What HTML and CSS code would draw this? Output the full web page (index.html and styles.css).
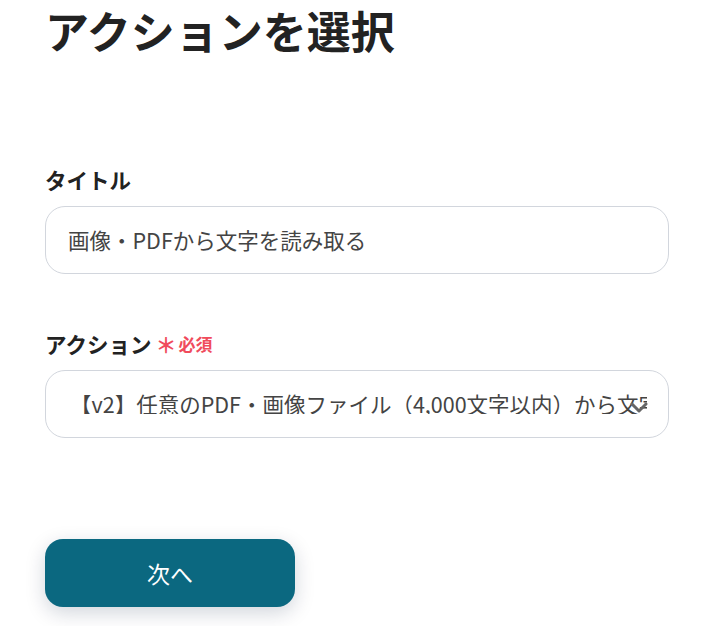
FILE: index.html
```html
<!DOCTYPE html>
<html lang="ja">
<head>
<meta charset="utf-8">
<link rel="stylesheet" href="styles.css">
</head>
<body>
<main class="page">
  <h1 class="title">アクションを選択</h1>
  <section class="field field-title">
    <div class="label">タイトル</div>
    <div class="box">
      <span class="value">画像・PDFから文字を読み取る</span>
    </div>
  </section>
  <section class="field field-action">
    <div class="label">アクション<span class="req"><span class="star">＊</span>必須</span></div>
    <div class="box select">
      <span class="value nowrap">【v2】任意のPDF・画像ファイル（4,000文字以内）から文字を読み取る</span>
      <svg class="chev" width="18" height="12" viewBox="0 0 18 12"><path d="M2 3 L9 10 L16 3" fill="none" stroke="#666" stroke-width="3" stroke-linecap="round" stroke-linejoin="round"/></svg>
    </div>
  </section>
  <button class="next">次へ</button>
</main>
</body>
</html>
```
FILE: styles.css
```css
* { box-sizing: border-box; }
html, body { margin: 0; padding: 0; background: #fff; }
body {
  font-family: "Noto Sans CJK JP", "Noto Sans", sans-serif;
  color: #222;
}
.page {
  width: 716px;
  height: 626px;
  overflow: hidden;
  padding: 0 47px 0 45px;
}
.title {
  margin: 0;
  font-size: 44px;
  font-weight: 700;
  line-height: 1.4;
  color: #222;
}
.field-title { margin-top: 104px; }
.field-action { margin-top: 56px; }
.label {
  font-size: 21.5px;
  font-weight: 700;
  line-height: 28px;
  color: #222;
  display: flex;
  align-items: center;
}
.req {
  color: #f04b5c;
  font-size: 17px;
  margin-left: 4px;
  display: inline-flex;
  align-items: center;
}
.star { font-size: 21px; margin-right: 2px; }
.box {
  margin-top: 12px;
  height: 68px;
  border: 1px solid #d2d6dd;
  border-radius: 20px;
  display: flex;
  align-items: center;
  padding: 0 22px;
  position: relative;
  overflow: hidden;
}
.value {
  font-size: 21.5px;
  color: #444;
  line-height: 1;
}
.select { padding-left: 24px; padding-right: 21px; }
.nowrap { white-space: nowrap; overflow: hidden; }
.chev {
  position: absolute;
  right: 20px;
  top: 30px;
}
.next {
  display: block;
  margin-top: 101px;
  width: 250px;
  height: 68px;
  border: none;
  border-radius: 18px;
  background: #0b6880;
  color: #fff;
  font-family: "Noto Sans CJK JP", sans-serif;
  font-size: 23px;
  box-shadow: 0 6px 20px rgba(0, 30, 60, 0.18);
}
```
